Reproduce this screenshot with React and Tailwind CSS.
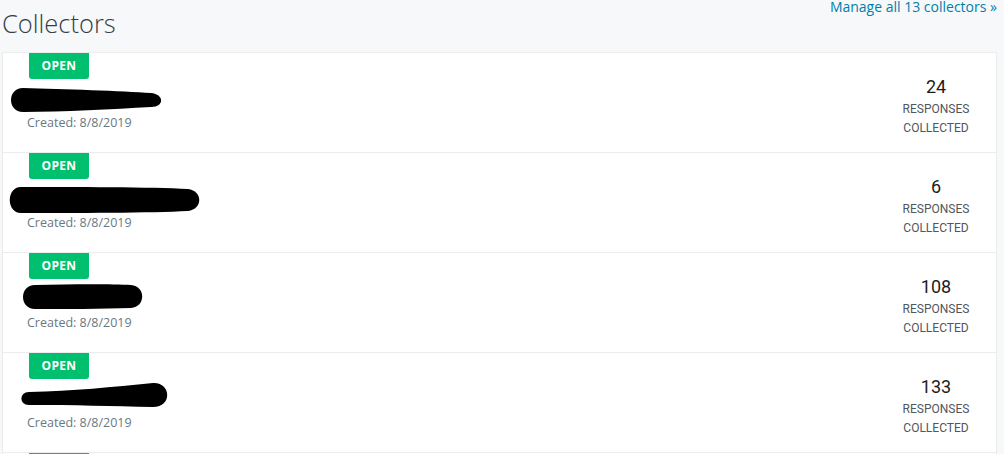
const COLLECTORS = [
  {
    created: '8/8/2019',
    responses: 24,
    blob: 'M20 9 C60 10 120 12 148 14 C161 15 162 28 148 28 C110 30 60 33 20 33 C4 33 4 9 20 9 Z'
  },
  {
    created: '8/8/2019',
    responses: 6,
    blob: 'M18 8 C70 8 150 8 185 10 C200 12 200 30 185 32 C150 34 70 34 18 34 C3 34 3 8 18 8 Z'
  },
  {
    created: '8/8/2019',
    responses: 108,
    blob: 'M32 6 C70 5 110 5 128 6 C143 7 143 28 128 29 C100 30 60 30 32 30 C16 30 16 6 32 6 Z'
  },
  {
    created: '8/8/2019',
    responses: 133,
    blob: 'M26 13 C70 12 110 8 150 4 C168 3 170 28 150 28 C110 27 70 26 26 26 C16 26 16 13 26 13 Z'
  }
];

function CollectorRow({ collector }) {
  return (
    <div className="flex h-[100px] justify-between border-t border-[#ebecec]">
      <div className="flex flex-col">
        <span className="ml-[26px] flex h-[26px] w-[60px] items-center justify-center rounded-b-[3px] bg-[#00bf6f] text-[12px] font-bold tracking-[0.3px] text-white">
          OPEN
        </span>
        <svg width="220" height="36" viewBox="0 0 220 36" aria-hidden="true">
          <path d={collector.blob} fill="#000" />
        </svg>
        <span className="ml-[24px] text-[12.5px] leading-[16px] text-[#6b787f]">Created: {collector.created}</span>
      </div>
      <div className="mr-[18px] flex w-[84px] flex-col items-center pt-[22px] font-['Roboto',sans-serif]">
        <span className="text-[18px] leading-[24px] text-[#1c1c1c]">{collector.responses}</span>
        <span className="mt-[1px] text-[12px] leading-[19px] text-[#4d575f]">RESPONSES</span>
        <span className="text-[12px] leading-[19px] text-[#4d575f]">COLLECTED</span>
      </div>
    </div>
  );
}

export default function App() {
  return (
    <div className="h-[454px] overflow-hidden bg-[#f7f8fa] font-['Open_Sans',sans-serif]">
      <div className="flex h-[52px] items-start justify-between pr-[7px]">
        <h1 className="ml-[2px] pt-[8px] text-[25.5px] font-light leading-[30px] text-[#333e48]">Collectors</h1>
        <a className="text-[14px] leading-[14px] text-[#007faa]" href="#">
          Manage all 13 collectors »
        </a>
      </div>
      <div className="ml-[2px] w-[995px] border-x border-[#ebecec] bg-white">
        {COLLECTORS.map((c, i) => (
          <CollectorRow key={i} collector={c} />
        ))}
        <div className="h-[100px] border-t border-[#ebecec]">
          <span className="ml-[26px] block h-[26px] w-[60px] rounded-b-[3px] bg-[#00bf6f]" />
        </div>
      </div>
    </div>
  );
}
